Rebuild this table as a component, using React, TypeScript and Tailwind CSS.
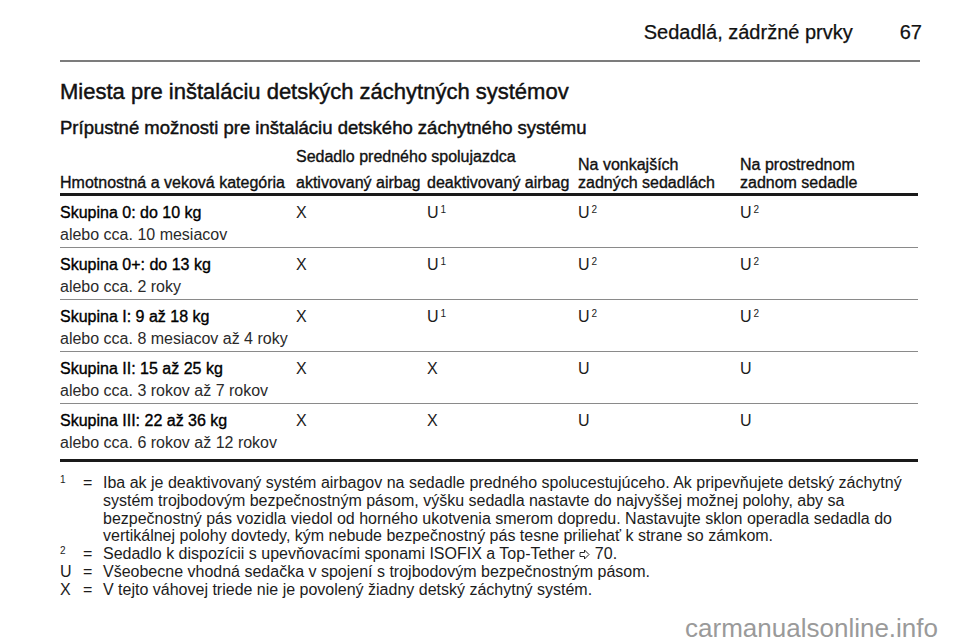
import React from "react";

const rows = [
  { label: "Skupina 0: do 10 kg", sub: "alebo cca. 10 mesiacov", c: [["X", ""], ["U", "1"], ["U", "2"], ["U", "2"]] },
  { label: "Skupina 0+: do 13 kg", sub: "alebo cca. 2 roky", c: [["X", ""], ["U", "1"], ["U", "2"], ["U", "2"]] },
  { label: "Skupina I: 9 až 18 kg", sub: "alebo cca. 8 mesiacov až 4 roky", c: [["X", ""], ["U", "1"], ["U", "2"], ["U", "2"]] },
  { label: "Skupina II: 15 až 25 kg", sub: "alebo cca. 3 rokov až 7 rokov", c: [["X", ""], ["X", ""], ["U", ""], ["U", ""]] },
  { label: "Skupina III: 22 až 36 kg", sub: "alebo cca. 6 rokov až 12 rokov", c: [["X", ""], ["X", ""], ["U", ""], ["U", ""]] },
];

function Arrow() {
  return (
    <svg width="11" height="11" viewBox="0 0 11 11" className="inline-block align-[-1px]">
      <path d="M1 3.5 H5.5 V1 L10 5.5 L5.5 10 V7.5 H1 Z" fill="none" stroke="#222" strokeWidth="1" strokeLinejoin="miter" />
    </svg>
  );
}

export default function App() {
  return (
    <div
      className="relative w-[960px] h-[642px] overflow-hidden bg-white text-[#1c1c1c] pl-[60px] pr-[40px]"
      style={{ fontFamily: '"Liberation Sans", Arial, sans-serif' }}
    >
      {/* running header */}
      <div className="flex justify-end items-baseline pt-[20px] text-[20px] leading-[24px] -mr-[2px] text-[#111] [-webkit-text-stroke:0.25px_#111]">
        <span>Sedadlá, zádržné prvky</span>
        <span className="ml-[47px]">67</span>
      </div>
      <div className="mt-[16px] h-[2px] bg-[#7c7c7c]" />

      <h1 className="mt-[16px] text-[22px] leading-[28px] text-[#111] [-webkit-text-stroke:0.45px_#111]">
        Miesta pre inštaláciu detských záchytných systémov
      </h1>
      <h2 className="mt-[10px] text-[18.5px] leading-[24px] text-[#111] [-webkit-text-stroke:0.45px_#111]">
        Prípustné možnosti pre inštaláciu detského záchytného systému
      </h2>

      {/* table header */}
      <div className="mt-[7px] grid grid-cols-[236px_131px_151px_162px_1fr] items-end text-[16px] text-[#111] [-webkit-text-stroke:0.35px_#111]">
        <div className="col-start-2 col-span-2 row-start-1 leading-[20px] pb-[6px]">
          Sedadlo predného spolujazdca
        </div>
        <div className="col-start-1 row-start-2 leading-[20px] whitespace-nowrap">Hmotnostná a veková kategória</div>
        <div className="col-start-2 row-start-2 leading-[20px] whitespace-nowrap">aktivovaný airbag</div>
        <div className="col-start-3 row-start-2 leading-[20px] whitespace-nowrap">deaktivovaný airbag</div>
        <div className="col-start-4 row-start-1 row-span-2 leading-[18px] pb-[1px] whitespace-nowrap">
          Na vonkajších
          <br />
          zadných sedadlách
        </div>
        <div className="col-start-5 row-start-1 row-span-2 leading-[18px] pb-[1px] whitespace-nowrap">
          Na prostrednom
          <br />
          zadnom sedadle
        </div>
      </div>
      <div className="h-[3px] bg-[#1a1a1a] mr-[2px]" />

      {/* rows */}
      <div className="text-[16px] mr-[2px]">
        {rows.map((r, i) => (
          <div
            key={i}
            className={
              "grid grid-cols-[236px_131px_151px_162px_1fr] pt-[8px] " +
              (i < rows.length - 1 ? "pb-[3px] border-b border-[#8a8a8a]" : "pb-[7px]")
            }
          >
            <div className="whitespace-nowrap">
              <div className="leading-[18px] text-[#000] [-webkit-text-stroke:0.35px_#000]">{r.label}</div>
              <div className="mt-[4px] leading-[18px] text-[#2a2a2a]">{r.sub}</div>
            </div>
            {r.c.map(([v, s], j) => (
              <div key={j} className="leading-[18px] flex items-start">
                <span>{v}</span>
                {s && <span className="text-[10px] leading-[10px] ml-[2px] mt-[1px]">{s}</span>}
              </div>
            ))}
          </div>
        ))}
      </div>
      <div className="h-[3px] bg-[#1a1a1a] mr-[2px]" />

      {/* footnotes */}
      <div className="mt-[12px] grid grid-cols-[23px_20px_1fr] text-[16px] leading-[17.8px] text-[#1c1c1c]">
        <div className="text-[10px] leading-[12px]">1</div>
        <div>=</div>
        <div className="whitespace-nowrap">
          Iba ak je deaktivovaný systém airbagov na sedadle predného spolucestujúceho. Ak pripevňujete detský záchytný
          <br />
          systém trojbodovým bezpečnostným pásom, výšku sedadla nastavte do najvyššej možnej polohy, aby sa
          <br />
          bezpečnostný pás vozidla viedol od horného ukotvenia smerom dopredu. Nastavujte sklon operadla sedadla do
          <br />
          vertikálnej polohy dovtedy, kým nebude bezpečnostný pás tesne priliehať k strane so zámkom.
        </div>
        <div className="text-[10px] leading-[12px]">2</div>
        <div>=</div>
        <div className="whitespace-nowrap">
          Sedadlo k dispozícii s upevňovacími sponami ISOFIX a Top-Tether <Arrow /> 70.
        </div>
        <div>U</div>
        <div>=</div>
        <div className="whitespace-nowrap">Všeobecne vhodná sedačka v spojení s trojbodovým bezpečnostným pásom.</div>
        <div>X</div>
        <div>=</div>
        <div className="whitespace-nowrap">V tejto váhovej triede nie je povolený žiadny detský záchytný systém.</div>
      </div>

      <div className="absolute right-[22px] bottom-[-1px] text-[26px] leading-[30px] text-[#9a9a9a]">
        carmanualsonline.info
      </div>
    </div>
  );
}
